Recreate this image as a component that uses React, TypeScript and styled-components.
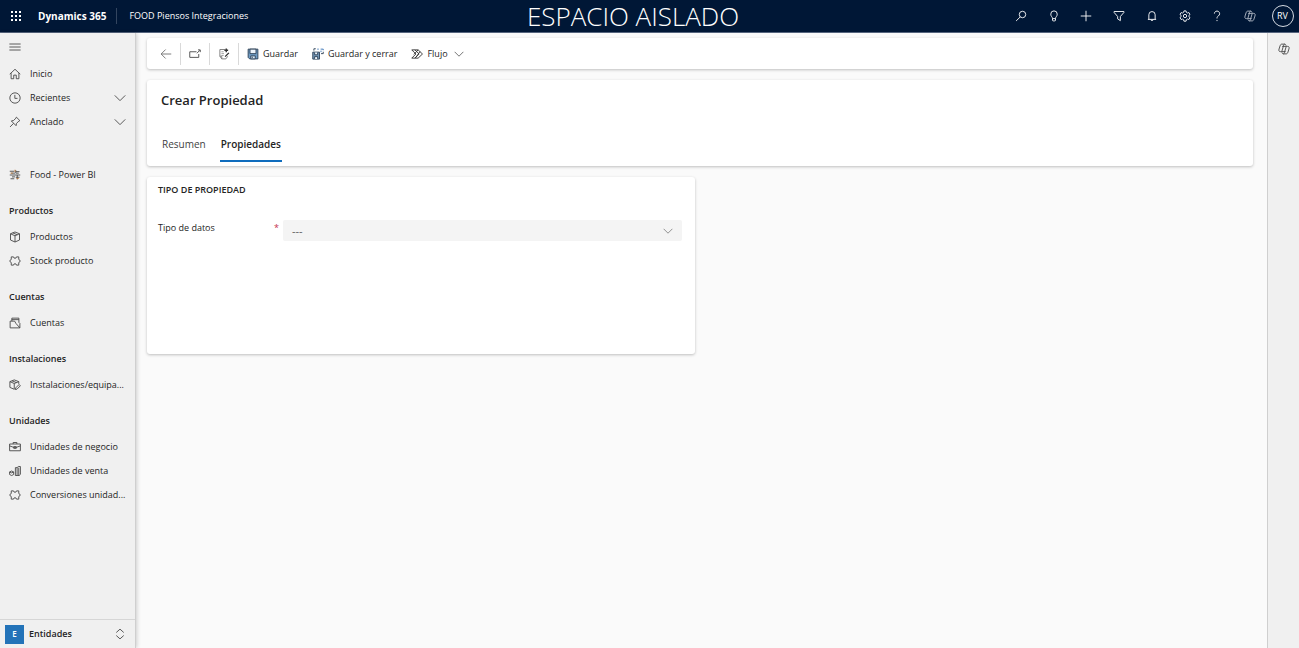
import React from "react";
import styled, { createGlobalStyle, css } from "styled-components";

const GlobalStyle = createGlobalStyle`
  * { box-sizing: border-box; }
  body {
    margin: 0;
    background: #fafafa;
    color: #242424;
    font-family: "Open Sans", "Noto Sans", sans-serif;
    font-size: 9px;
    line-height: 16px;
  }
  button, select { font: inherit; color: inherit; }
  a { color: inherit; text-decoration: none; }
  h1, h2, h3, ul { margin: 0; padding: 0; font-size: inherit; }
  ul { list-style: none; }
  svg { flex-shrink: 0; }
`;

const Page = styled.div`
  display: grid;
  grid-template-rows: 33px 1fr;
  min-height: 100vh;
`;

/* Top bar */

const TopBar = styled.header`
  display: grid;
  grid-template-columns: 1fr auto 1fr 33px;
  align-items: center;
  background: #001736;
  border-bottom: 1px solid #56657e;
  color: #fff;
`;

const Brand = styled.div`
  display: flex;
  align-items: center;
  gap: 10px;
  padding-left: 8px;
`;

const PlainButton = styled.button`
  display: inline-flex;
  align-items: center;
  justify-content: center;
  padding: 0;
  border: 0;
  background: none;
  cursor: pointer;
`;

const WaffleButton = styled(PlainButton)`
  width: 16px;
  height: 16px;
  margin-right: 4px;
`;

const BrandName = styled.a`
  font-size: 10px;
  font-weight: 700;
`;

const AppName = styled.a`
  padding-left: 12px;
  border-left: 1px solid #33455f;
  line-height: 16px;
`;

const EnvironmentName = styled.div`
  font-size: 26px;
  font-weight: 300;
  line-height: 32px;
  white-space: nowrap;
`;

const TopActions = styled.nav`
  display: flex;
  align-items: center;
  justify-content: space-between;
  justify-self: end;
  width: 261px;
`;

const TopAction = styled(PlainButton)`
  width: 32px;
  height: 32px;
`;

const Avatar = styled(PlainButton)`
  justify-self: center;
  width: 22px;
  height: 22px;
  border: 1px solid #d5dae2;
  border-radius: 50%;
  line-height: 12px;
`;

/* Body */

const Body = styled.div`
  display: grid;
  grid-template-columns: 136px minmax(0, 1fr) 32px;
`;

const Sidebar = styled.aside`
  display: flex;
  flex-direction: column;
  background: #f0f0f0;
  border-right: 1px solid #cfcfcf;
  box-shadow: 1px 0 4px rgba(0, 0, 0, 0.18);
`;

const MenuToggle = styled(PlainButton)`
  width: 14px;
  height: 14px;
  margin: 7px 8px 8px;
`;

const NavList = styled.ul<{ $spaced?: boolean }>`
  margin-top: ${(p) => (p.$spaced ? "29px" : "0")};
`;

const navRow = css`
  display: flex;
  align-items: center;
  width: 100%;
  height: 24px;
  padding: 0 9px;
  gap: 9px;
  white-space: nowrap;
`;

const NavLink = styled.a`
  ${navRow}
`;

const NavToggle = styled(PlainButton)`
  ${navRow}
  justify-content: flex-start;
  & > svg:last-child { margin-left: auto; }
`;

const NavHeading = styled.h2`
  margin-top: 10px;
  padding: 0 9px;
  font-weight: 600;
  line-height: 28px;
`;

const AreaSwitcher = styled(PlainButton)`
  justify-content: flex-start;
  gap: 5px;
  height: 29px;
  margin-top: auto;
  padding: 0 9px 0 5px;
  border-top: 1px solid #d6d6d6;
  font-weight: 600;
  & > svg { margin-left: auto; }
`;

const AreaBadge = styled.span`
  width: 19px;
  height: 19px;
  background: #2373b8;
  color: #fff;
  font-size: 8px;
  line-height: 18px;
  text-align: center;
`;

const Main = styled.main`
  display: flex;
  flex-direction: column;
  gap: 11px;
  padding: 5px 14px 11px 11px;
`;

const Card = styled.section`
  background: #fff;
  border-radius: 3px;
  box-shadow: 0 1px 3px rgba(0, 0, 0, 0.24);
`;

const CommandBar = styled(Card)`
  display: flex;
  align-items: center;
  height: 31px;
  padding: 0 5px;
`;

const IconCommand = styled(PlainButton)`
  width: 29px;
  height: 22px;
  border-right: 1px solid #d9d9d9;
`;

const Command = styled(PlainButton)`
  gap: 4px;
  height: 22px;
  padding: 0 6px 0 8px;
  white-space: nowrap;
`;

const RecordHeader = styled(Card)`
  padding: 9px 14px 4px;
`;

const RecordTitle = styled.h1`
  font-size: 13px;
  font-weight: 600;
  line-height: 22px;
`;

const TabList = styled.div`
  display: flex;
  gap: 13px;
  margin-top: 22px;
`;

const Tab = styled(PlainButton)<{ $active?: boolean }>`
  height: 29px;
  padding: 0 1px 6px;
  border-bottom: 2px solid ${(p) => (p.$active ? "#0f6cbd" : "transparent")};
  color: ${(p) => (p.$active ? "#242424" : "#424242")};
  font-size: 10px;
  font-weight: ${(p) => (p.$active ? 600 : 400)};
`;

const FormColumns = styled.div`
  display: grid;
  grid-template-columns: repeat(2, minmax(0, 1fr));
  gap: 10px;
`;

const FormSection = styled(Card)`
  min-height: 177px;
  padding: 5px 13px 11px 11px;
`;

const SectionTitle = styled.h3`
  font-weight: 600;
`;

const Field = styled.div`
  display: grid;
  grid-template-columns: 125px minmax(0, 1fr);
  margin-top: 22px;
`;

const FieldLabel = styled.label`
  display: flex;
  justify-content: space-between;
  padding-right: 4px;
`;

const Required = styled.span`
  color: #c4314b;
`;

const SelectBox = styled.div`
  display: grid;
  align-items: center;
  & > * { grid-area: 1 / 1; }
  & > svg { justify-self: end; margin-right: 9px; pointer-events: none; }
`;

const Select = styled.select`
  appearance: none;
  width: 100%;
  height: 21px;
  padding: 0 24px 0 9px;
  border: 0;
  border-radius: 2px;
  background: #f4f4f4;
  color: #616161;
  font-size: 11px;
`;

const SideRail = styled.aside`
  display: flex;
  flex-direction: column;
  align-items: center;
  padding-top: 10px;
  background: #f0f0f0;
  border-left: 1px solid #cfcfcf;
`;

/* Icons, all drawn on a 16-unit grid */

const icons = {
  search: <><circle cx="10" cy="6" r="4.3" /><path d="M7 9.2 1.5 14.6" /></>,
  bulb: <path d="M6 11.2C6 9.3 3.7 8.500 3.700 5.500a4.300 4.300 0 0 1 8.600 0c0 3-2.300 3.800-2.300 5.700v2.300a1 1 0 0 1-1 1H7a1 1 0 0 1-1-1zM6 11.500h4" />,
  plus: <path d="M8 1v14M1 8h14" />,
  filter: <path d="M1.500 2h13v1.300L9.800 8.700v5.500l-3.600-2.400V8.700L1.500 3.300z" />,
  bell: <path d="M2.500 12.500h11M3.800 12.500V6.300a4.200 4.200 0 0 1 8.400 0v6.200M6.500 12.700c0 2 3 2 3 0" />,
  gear: <><circle cx="8" cy="8" r="2.200" /><path d="m6.600 1.200-.4 1.900-1.500.9-1.900-.6-1.500 2.500 1.500 1.300v1.700l-1.500 1.300 1.500 2.500 1.900-.6 1.500.9.4 1.900h2.800l.4-1.900 1.500-.9 1.900.6 1.500-2.500-1.500-1.300V7.200l1.500-1.300-1.500-2.500-1.900.6-1.500-.9-.4-1.900z" /></>,
  help: <><path d="M4.500 4.800a3.500 3.500 0 1 1 5.300 3.100C8.500 8.800 8 9.500 8 11.300" /><path d="M8 13.300v1.500" /></>,
  copilot: <path d="M10.800 3.500C10.300 2 9.800 1.500 8.600 1.500H5.200C3.800 1.500 3.200 2.400 2.700 4L1.400 8c-.7 2.300-.1 3.500 1.800 3.500H5L7.300 3.700C7.700 2.300 8 1.500 9 1.500M5.200 12.500c.5 1.500 1 2 2.200 2h3.400c1.400 0 2-.9 2.500-2.500l1.300-4c.7-2.300.1-3.500-1.800-3.500H11L8.700 12.300c-.4 1.400-.7 2.200-1.700 2.200M5.500 4.500H11M5 11.500h5.200" />,
  menu: <path d="M.5 4h15M.5 8h15M.5 12h15" />,
  home: <path d="m1 8.200 7-6.500 7 6.500M2.800 6.800v7.500h3.500V9.500h3.400v4.800h3.500V6.800" />,
  clock: <><circle cx="8" cy="8" r="6.900" /><path d="M7.800 3.800v4.700h3.500" /></>,
  pin: <path d="m9.800 1.500 4.700 4.700-1.300.5-3.200 3.200-.6 3L3.100 6.600l3-.6 3.200-3.200zM6.100 9.800l-4.700 4.800" />,
  chevron: <path d="m1 4.500 7 7 7-7" />,
  upDown: <path d="m3 6 5-4.500L13 6M3 10l5 4.500 5-4.500" />,
  report: <><path d="M1 3h6M3 5.500h5M1 8h14M4 10.500h4M2 13h5" /><path d="M9 1.500v4h4M9 3.500h5M11 8v6M9 11h5" /><path d="M8 1v3M10 12.500h3M2 5.500h3" stroke="#c07835" /></>,
  box: <path d="m8 1.300 6 2.400v8.300l-6 2.700L2 12V3.700zM2 3.700l6 2.700 6-2.700M8 6.400v8.300M5 2.500l6 2.500" />,
  puzzle: <path d="M3 2.500h3c0 2.500 4 2.500 4 0h3V6c2.500.5 2.500 3.500 0 4v3.500h-3c0-2.500-4-2.500-4 0H3V10C.5 9.500.5 6.500 3 6z" />,
  account: <path d="M1.500 5.500v9h13v-6l-1.300-1.300M3.800 5.500V1.500h9.400v5.700M1.500 5.500h6l1.700 3 5.300 6M3.800 3.500h9.400" />,
  boxEdit: <path d="m7 1.200 6 2.300v3M7 13.700l-5.800-2.500V3.500L7 1.200M1.200 3.500 7 6l6-2.500M7 6v7.700M4 2.400l6 2.400M9 11.800l4.500-4.500 1.700 1.700-4.500 4.500-2.300.6z" />,
  briefcase: <path d="M.8 4h14.400v9H.8zM5.500 4V2h5v2M.8 6.500l5.500 2h3.400l5.500-2M6.300 7.500h3.400v2.300H6.300z" />,
  units: <path d="M.8 9.300 3.500 8l2.700 1.300v3.400L3.500 14 .8 12.700zM.8 9.300l2.700 1.200 2.700-1.200M8.500 3.500h2.300V14H8.500zM10.800 3.500 12.500 2h2.700v10.500L13.500 14h-2.700M13 3.500V14" />,
  back: <path d="M15 8H1.500M7.500 2l-6 6 6 6" />,
  popOut: <path d="M10 5H1v7.500h12V8M10.500 7 14.500 3M12 2.500h3v3" />,
  checkList: <><path d="M9 2H2.500v9L5 14.500h5.500L13 11" stroke="#777" /><path d="M4.500 5h3M4.500 7.500h3.500M4.500 10h3" stroke="#999" /><path d="M5 14.500V11H2.500" stroke="#777" /><path d="M11 .5v5M8.500 3h5M14.500 6.500 9.500 11.500" strokeWidth="1.800" /></>,
  save: <><path d="M1.500 1.500h13v13h-11l-2-2z" fill="#6f9cc4" /><path d="M4 1.500v6h8v-6z" fill="#eef5fb" /><path d="M5 10.500h6v4H5z" fill="#dcecf8" /><path d="M7 11.500v2" /></>,
  saveClose: <><path d="M1 5.500h9v9.300H1z" fill="#7599b8" /><path d="M3.500 6v3h4V6M3.500 14.500v-3h4v3" fill="#eef5fb" /><path d="M2.500 3.500V1H5M12 7.500h3V5" /><path d="M7 1.500h2M11.500 1.500H15V3M12 3.500v2" stroke="#3673b6" /></>,
  flow: <path d="M1 2.500h8.500L15.300 8l-5.800 5.500H1L6.500 8zM5.300 2.500 10.800 8l-5.500 5.500M9.500 2.500 3.800 8.500M12 4.800 6 13" />,
};

type IconName = keyof typeof icons;

type IconProps = { name: IconName; size?: number; color?: string; weight?: number };

function Icon({ name, size = 12, color = "#484848", weight = 1.2 }: IconProps) {
  return (
    <svg
      width={size}
      height={size}
      viewBox="0 0 16 16"
      fill="none"
      stroke={color}
      strokeWidth={weight}
      strokeLinejoin="round"
      aria-hidden="true"
    >
      {icons[name]}
    </svg>
  );
}

function Waffle() {
  return (
    <svg width="12" height="12" viewBox="0 0 12 12" fill="#fff" aria-hidden="true">
      {[1, 5, 9].map((y) => [1, 5, 9].map((x) => <rect key={`${x}-${y}`} x={x} y={y} width="2" height="2" />))}
    </svg>
  );
}

type NavItem = { icon: IconName; label: string };

const topActions: NavItem[] = [
  { icon: "search", label: "Buscar" },
  { icon: "bulb", label: "Sugerencias" },
  { icon: "plus", label: "Nuevo" },
  { icon: "filter", label: "Filtrar" },
  { icon: "bell", label: "Notificaciones" },
  { icon: "gear", label: "Configuración" },
  { icon: "help", label: "Ayuda" },
  { icon: "copilot", label: "Copilot" },
];

const navGroups: { title: string; items: NavItem[] }[] = [
  { title: "Productos", items: [{ icon: "box", label: "Productos" }, { icon: "puzzle", label: "Stock producto" }] },
  { title: "Cuentas", items: [{ icon: "account", label: "Cuentas" }] },
  { title: "Instalaciones", items: [{ icon: "boxEdit", label: "Instalaciones/equipa..." }] },
  {
    title: "Unidades",
    items: [
      { icon: "briefcase", label: "Unidades de negocio" },
      { icon: "units", label: "Unidades de venta" },
      { icon: "puzzle", label: "Conversiones unidad..." },
    ],
  },
];

function NavEntry({ icon, label }: NavItem) {
  return (
    <li>
      <NavLink href="#">
        <Icon name={icon} />
        {label}
      </NavLink>
    </li>
  );
}

export default function App() {
  return (
    <Page>
      <GlobalStyle />
      <TopBar>
        <Brand>
          <WaffleButton aria-label="Aplicaciones"><Waffle /></WaffleButton>
          <BrandName href="#">Dynamics 365</BrandName>
          <AppName href="#">FOOD Piensos Integraciones</AppName>
        </Brand>
        <EnvironmentName>ESPACIO AISLADO</EnvironmentName>
        <TopActions>
          {topActions.map((a) => (
            <TopAction key={a.icon} aria-label={a.label}>
              <Icon name={a.icon} color={a.icon === "copilot" ? "#b4bcc8" : "#fff"} />
            </TopAction>
          ))}
        </TopActions>
        <Avatar>RV</Avatar>
      </TopBar>
      <Body>
        <Sidebar>
          <MenuToggle aria-label="Menú"><Icon name="menu" /></MenuToggle>
          <NavList>
            <NavEntry icon="home" label="Inicio" />
            <li>
              <NavToggle><Icon name="clock" />Recientes<Icon name="chevron" /></NavToggle>
            </li>
            <li>
              <NavToggle><Icon name="pin" />Anclado<Icon name="chevron" /></NavToggle>
            </li>
          </NavList>
          <NavList $spaced>
            <NavEntry icon="report" label="Food - Power BI" />
          </NavList>
          {navGroups.map((g) => (
            <React.Fragment key={g.title}>
              <NavHeading>{g.title}</NavHeading>
              <NavList>
                {g.items.map((item) => <NavEntry key={item.label} {...item} />)}
              </NavList>
            </React.Fragment>
          ))}
          <AreaSwitcher>
            <AreaBadge>E</AreaBadge>
            Entidades
            <Icon name="upDown" />
          </AreaSwitcher>
        </Sidebar>
        <Main>
          <CommandBar>
            <IconCommand aria-label="Atrás"><Icon name="back" color="#707070" /></IconCommand>
            <IconCommand aria-label="Abrir en una ventana nueva"><Icon name="popOut" /></IconCommand>
            <IconCommand aria-label="Comprobar"><Icon name="checkList" color="#303030" /></IconCommand>
            <Command><Icon name="save" color="#2b3f55" />Guardar</Command>
            <Command><Icon name="saveClose" color="#2b3f55" />Guardar y cerrar</Command>
            <Command><Icon name="flow" color="#303030" />Flujo</Command>
            <PlainButton aria-label="Más opciones de flujo"><Icon name="chevron" size={10} /></PlainButton>
          </CommandBar>
          <RecordHeader>
            <RecordTitle>Crear Propiedad</RecordTitle>
            <TabList role="tablist">
              <Tab role="tab" aria-selected="false">Resumen</Tab>
              <Tab role="tab" aria-selected="true" $active>Propiedades</Tab>
            </TabList>
          </RecordHeader>
          <FormColumns>
            <FormSection>
              <SectionTitle>TIPO DE PROPIEDAD</SectionTitle>
              <Field>
                <FieldLabel htmlFor="tipo-datos">
                  Tipo de datos
                  <Required>*</Required>
                </FieldLabel>
                <SelectBox>
                  <Select id="tipo-datos" defaultValue="">
                    <option value="">---</option>
                  </Select>
                  <Icon name="chevron" size={10} color="#707070" />
                </SelectBox>
              </Field>
            </FormSection>
          </FormColumns>
        </Main>
        <SideRail>
          <PlainButton aria-label="Copilot"><Icon name="copilot" /></PlainButton>
        </SideRail>
      </Body>
    </Page>
  );
}
